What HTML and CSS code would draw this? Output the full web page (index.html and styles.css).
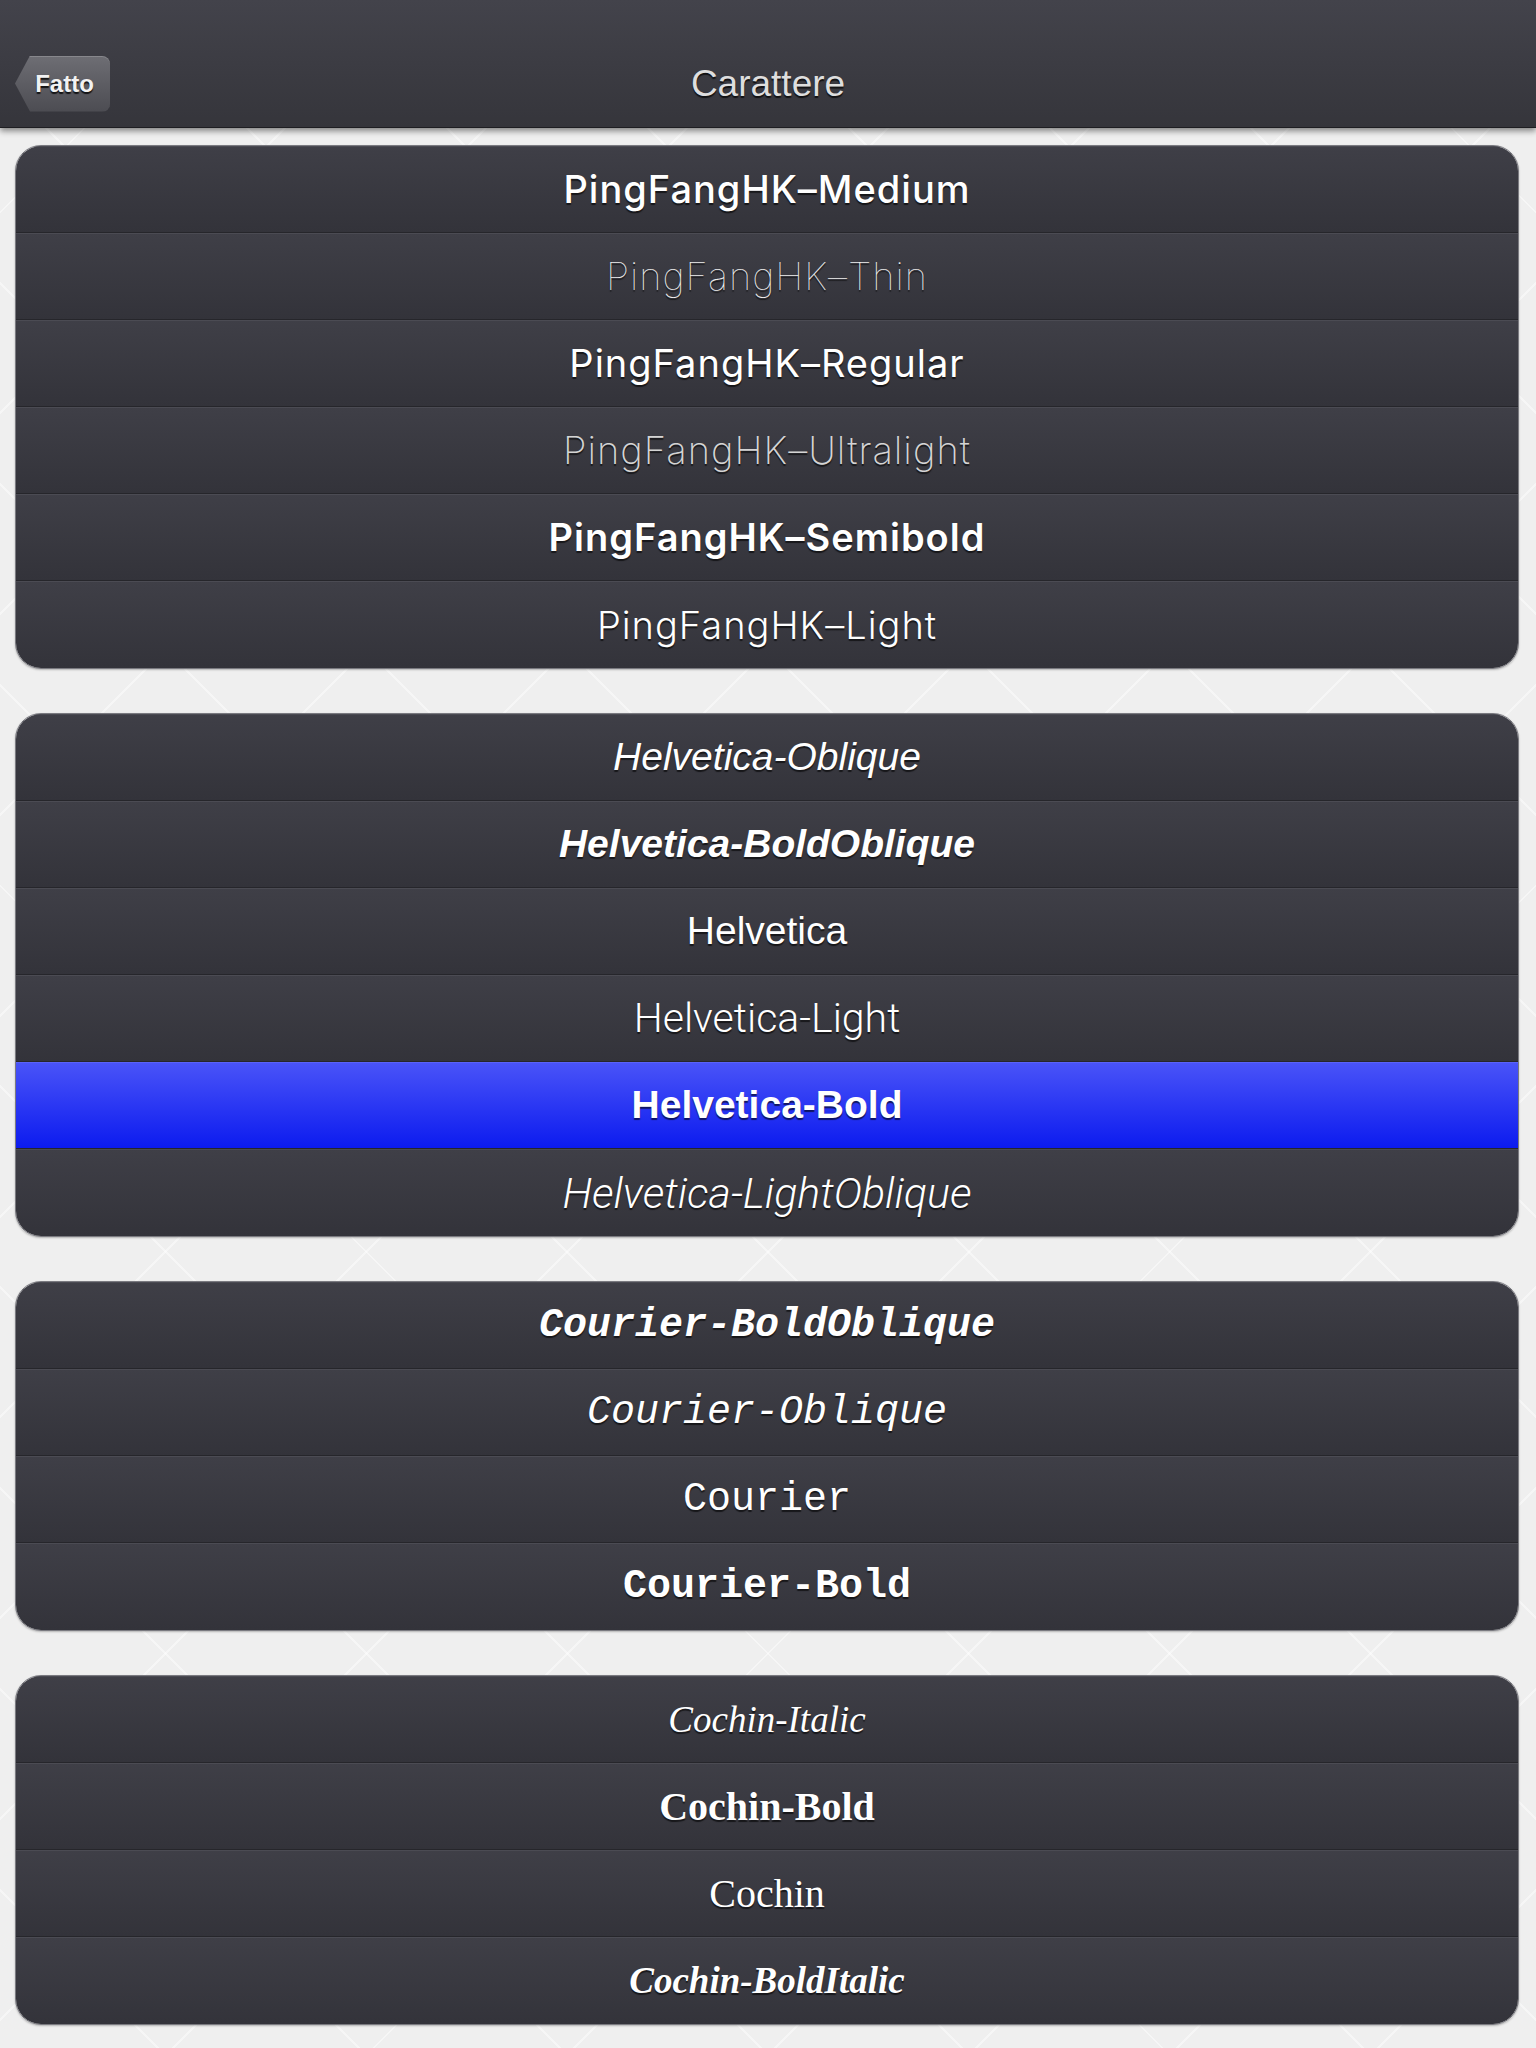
FILE: index.html
```html
<!DOCTYPE html>
<html lang="it">
<head>
    <meta charset="UTF-8">
    <meta name="viewport" content="width=device-width, initial-scale=1.0">
    <title>Carattere</title>
    <link rel="stylesheet" href="styles.css">
</head>
<body>
    <header class="navbar">
        <div class="nav-left">
            <button class="back-button" type="button">Fatto</button>
        </div>
        <h1 class="nav-title">Carattere</h1>
        <div class="nav-right"></div>
    </header>

    <main class="font-list">
        <!-- PingFang -->
        <ul class="group">
            <li class="row pf medium">PingFangHK–Medium</li>
            <li class="row pf thin">PingFangHK–Thin</li>
            <li class="row pf regular">PingFangHK–Regular</li>
            <li class="row pf ultralight">PingFangHK–Ultralight</li>
            <li class="row pf semibold">PingFangHK–Semibold</li>
            <li class="row pf light">PingFangHK–Light</li>
        </ul>

        <!-- Helvetica -->
        <ul class="group">
            <li class="row hv oblique">Helvetica-Oblique</li>
            <li class="row hv bold oblique">Helvetica-BoldOblique</li>
            <li class="row hv">Helvetica</li>
            <li class="row hv light">Helvetica-Light</li>
            <li class="row hv bold selected">Helvetica-Bold</li>
            <li class="row hv light oblique">Helvetica-LightOblique</li>
        </ul>

        <!-- Courier -->
        <ul class="group">
            <li class="row cr bold oblique">Courier-BoldOblique</li>
            <li class="row cr oblique">Courier-Oblique</li>
            <li class="row cr">Courier</li>
            <li class="row cr bold">Courier-Bold</li>
        </ul>

        <!-- Cochin -->
        <ul class="group">
            <li class="row co italic">Cochin-Italic</li>
            <li class="row co bold">Cochin-Bold</li>
            <li class="row co">Cochin</li>
            <li class="row co bold italic">Cochin-BoldItalic</li>
        </ul>
    </main>
</body>
</html>
```

FILE: styles.css
```css
body {
    margin: 0;
    font-family: 'Liberation Sans', Arial, sans-serif;
    color: #ffffff;
    background-color: #efefef;
    /* lichte ruitjes op de achtergrond */
    background-image:
        repeating-linear-gradient(45deg, transparent 0 140px, rgba(255,255,255,0.45) 140px 142px),
        repeating-linear-gradient(-45deg, transparent 0 140px, rgba(255,255,255,0.45) 140px 142px);
}

/* Navigatiebalk */
.navbar {
    position: relative;
    z-index: 2;
    display: grid;
    grid-template-columns: 1fr auto 1fr;
    align-items: center;
    box-sizing: border-box;
    height: 128px;
    padding: 40px 15px 0 15px;
    background: linear-gradient(#43434b, #35353b);
    border-bottom: 1px solid #1e1e22;
    box-shadow: 0 3px 6px rgba(0,0,0,0.45);
}

.nav-title {
    margin: 0;
    font-size: 37px;
    font-weight: 400;
    color: #dedede;
    text-shadow: 0 2px 1px rgba(0,0,0,0.7);
}

.back-button {
    width: 95px;
    height: 56px;
    padding: 0 0 0 4px;
    border: none;
    border-radius: 8px;
    background: linear-gradient(#6e6e74, #4c4c52);
    box-shadow: inset 0 1px 0 rgba(255,255,255,0.18);
    clip-path: polygon(0 50%, 15px 0, 100% 0, 100% 100%, 15px 100%);
    font-family: 'Liberation Sans', Arial, sans-serif;
    font-size: 24px;
    font-weight: 700;
    color: #f2f2f2;
    text-shadow: 0 2px 1px rgba(0,0,0,0.8);
    cursor: pointer;
}

/* Lijst met lettertypes */
.font-list {
    padding: 17px 17px 20px 15px;
}

.group {
    list-style: none;
    margin: 0 0 44px 0;
    padding: 0;
    border: 1px solid #7a7a80;
    border-radius: 26px;
    overflow: hidden;
    box-shadow: 0 1px 2px rgba(0,0,0,0.25);
}

.row {
    display: flex;
    justify-content: center;
    align-items: center;
    box-sizing: border-box;
    height: 87px;
    background: linear-gradient(#3f3f47, #33333a);
    box-shadow: inset 0 1px 0 #4b4b53;
    border-bottom: 1px solid #26262b;
    text-shadow: 0 2px 1px rgba(0,0,0,0.6);
    white-space: nowrap;
}

.row:last-child {
    border-bottom: none;
}

.row.selected {
    background: linear-gradient(#4a54f8, #0c1bef);
    box-shadow: inset 0 1px 0 #5a63fa;
}

/* PingFang */
.pf {
    font-family: Inter, 'Noto Sans', sans-serif;
    font-size: 38px;
    letter-spacing: 1px;
}

.pf.medium { font-weight: 500; }
.pf.thin { font-weight: 100; color: #f0f0f0; }
.pf.regular { font-weight: 400; }
.pf.ultralight { font-weight: 200; color: #d4d4d4; }
.pf.semibold { font-weight: 600; }
.pf.light { font-weight: 300; }

/* Helvetica */
.hv {
    font-family: 'Liberation Sans', Arial, sans-serif;
    font-size: 39px;
}

.hv.light {
    font-family: Roboto, 'Liberation Sans', sans-serif;
    font-weight: 300;
    font-size: 41px;
}

.hv.light.oblique {
    font-size: 43px;
}

/* Courier */
.cr {
    font-family: 'Liberation Mono', 'Courier New', monospace;
    font-size: 40px;
}

/* Cochin */
.co {
    font-family: 'Liberation Serif', 'Times New Roman', serif;
    font-size: 40px;
}

.co.italic {
    font-size: 37px;
}

.bold { font-weight: 700; }
.oblique, .italic { font-style: italic; }
```
